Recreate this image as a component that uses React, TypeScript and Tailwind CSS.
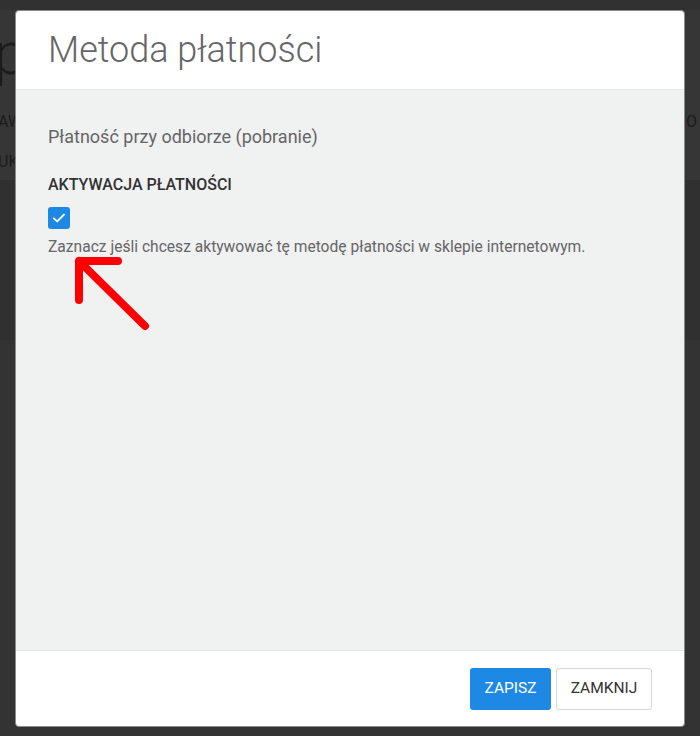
import React from "react";

function ArrowMark() {
  return (
    <svg width="90" height="90" viewBox="0 0 90 90" fill="none" aria-hidden="true">
      <path d="M8 8 L47 8 M8 8 L8 47 M8 8 L74 73" stroke="#ff0000" strokeWidth="8" strokeLinecap="round" strokeLinejoin="round" />
    </svg>
  );
}

function Check() {
  return (
    <svg width="16" height="16" viewBox="0 0 16 16" fill="none" aria-hidden="true">
      <path d="M2.8 8.4 L6.2 11.4 L13 4.6" stroke="white" strokeWidth="1.9" strokeLinecap="round" strokeLinejoin="round" />
    </svg>
  );
}

export default function App() {
  return (
    <div className="relative h-[736px] w-full overflow-hidden bg-[#333333]" style={{ fontFamily: "Roboto, 'Liberation Sans', sans-serif" }}>
      {/* page under the overlay */}
      <div className="absolute inset-0">
        <div className="h-[10px] bg-[#313131]" />
        <div className="h-[170px] bg-[#363636]" />
        <div className="h-[160px] bg-[#303030]" />
        <div className="h-[170px] bg-[#333333]" />
        <div className="absolute left-[-6px] top-[24px] text-[60px] font-light leading-none text-[#1c1c1c]">p</div>
        <div className="absolute left-[-2px] top-[110px] text-[16px] text-[#1c1c1c]">AW</div>
        <div className="absolute left-[-2px] top-[150px] text-[16px] text-[#1c1c1c]">UK</div>
        <div className="absolute left-[686px] top-[110px] text-[16px] text-[#1c1c1c]">O</div>
      </div>

      <div className="relative pl-[15px] pt-[10px]">
        <div className="flex h-[717px] w-[670px] flex-col overflow-hidden rounded-[4px] border border-[#8a8a8a] bg-white">
          <div className="flex h-[79px] shrink-0 items-center border-b border-[#e6e8e8] px-[32px]">
            <h1 className="text-[36px] font-light text-[#666666]">Metoda płatności</h1>
          </div>

          <div className="relative flex-1 bg-[#f0f1f1] px-[32px] pt-[35px]">
            <p className="text-[18px] leading-[24px] text-[#666666]">Płatność przy odbiorze (pobranie)</p>
            <h2 className="mt-[26px] text-[16px] font-medium leading-[20px] text-[#333333]">AKTYWACJA PŁATNOŚCI</h2>
            <div className="mt-[12px] flex h-[22px] w-[22px] items-center justify-center rounded-[3px] bg-[#1e88e5]">
              <Check />
            </div>
            <p className="mt-[8px] text-[15.6px] leading-[20px] text-[#666666]">
              Zaznacz jeśli chcesz aktywować tę metodę płatności w sklepie internetowym.
            </p>
            <div className="absolute left-[55px] top-[163px]">
              <ArrowMark />
            </div>
          </div>

          <div className="flex h-[76px] shrink-0 items-center justify-end gap-[5px] border-t border-[#e2e4e4] px-[32px]">
            <button className="h-[42px] w-[81px] rounded-[3px] bg-[#1e88e5] text-[15.5px] text-white">ZAPISZ</button>
            <button className="h-[42px] w-[96px] rounded-[3px] border border-[#d6d6d6] bg-white text-[15.5px] text-[#333333]">ZAMKNIJ</button>
          </div>
        </div>
      </div>
    </div>
  );
}
